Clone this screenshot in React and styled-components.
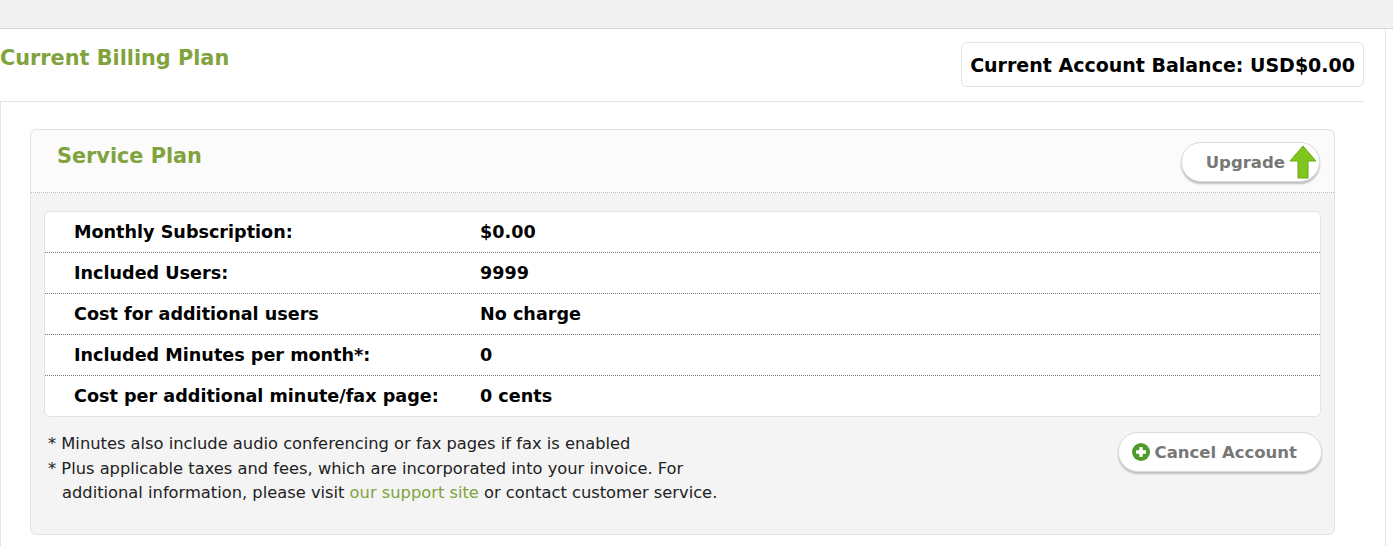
import React from 'react'
import styled, { createGlobalStyle } from 'styled-components'

const GlobalStyle = createGlobalStyle`
  body { margin: 0; background: #fff; font-family: "DejaVu Sans", Verdana, sans-serif; }
`

const TopBar = styled.div`
  height: 28px;
  background: #f1f1f1;
  border-bottom: 1px solid #d6d6d6;
`

const Page = styled.div`
  width: 1364px;
  border-right: 1px solid #e3e3e3;
  padding-right: 21px;
  box-sizing: content-box;
`

const Head = styled.div`
  display: flex;
  justify-content: space-between;
  align-items: flex-start;
  padding: 13px 0 14px;
`

const Title = styled.h1`
  margin: 4px 0 0;
  font-size: 20.8px;
  color: #80a33d;
  font-weight: bold;
`

const Balance = styled.div`
  border: 1px solid #e3e3e3;
  border-radius: 6px;
  padding: 11px 8px 10px;
  font-size: 19px;
  font-weight: bold;
  color: #000;
`

const Outer = styled.div`
  border: 1px solid #e5e5e5;
  border-right: none;
  padding: 27px 29px 12px;
`

const Panel = styled.div`
  background: #f4f4f4;
  border: 1px solid #e3e3e3;
  border-radius: 6px;
  padding-bottom: 28px;
`

const PanelHead = styled.div`
  display: flex;
  justify-content: space-between;
  background: #fbfbfb;
  border-bottom: 1px dotted #bdbdbd;
  border-radius: 6px 6px 0 0;
  padding: 12px 14px 8px 26px;
  height: 42px;
`

const PanelTitle = styled.h2`
  margin: 2px 0 0;
  font-size: 20.8px;
  color: #80a33d;
`

const Pill = styled.button`
  display: flex;
  align-items: center;
  gap: 4px;
  background: #fff;
  border: 1px solid #dcdcdc;
  border-radius: 22px;
  box-shadow: 0 2px 2px #bdbdbd;
  font-family: inherit;
  font-weight: bold;
  font-size: 16.5px;
  color: #777;
  padding: ${p => p.$pad};
  height: 40px;
`

const Table = styled.div`
  margin: 18px 13px 0;
  background: #fff;
  border: 1px solid #e3e3e3;
  border-radius: 6px;
`

const Row = styled.div`
  display: grid;
  grid-template-columns: 406px 1fr;
  padding: 0 29px;
  height: 40px;
  align-items: center;
  font-size: 17.6px;
  font-weight: bold;
  color: #000;
  & + & { border-top: 1px dotted #777; }
`

const Foot = styled.div`
  display: flex;
  justify-content: space-between;
  padding: 15px 12px 0 17px;
`

const Notes = styled.div`
  font-size: 16.3px;
  line-height: 24.5px;
  color: #222;
`

const Note = styled.div`
  padding-left: 14px;
  text-indent: -14px;
  max-width: 665px;
`

const Link = styled.a`
  color: #80a33d;
  text-decoration: none;
`

const rows = [
  ['Monthly Subscription:', '$0.00'],
  ['Included Users:', '9999'],
  ['Cost for additional users', 'No charge'],
  ['Included Minutes per month*:', '0'],
  ['Cost per additional minute/fax page:', '0 cents'],
]

const UpArrow = () => (
  <svg width="28" height="34" viewBox="0 0 28 34">
    <path d="M14 1 L27 16 H19 V33 H9 V16 H1 Z" fill="#7fc51c" stroke="#6aa814" />
  </svg>
)

const PlusCircle = () => (
  <svg width="20" height="20" viewBox="0 0 20 20">
    <circle cx="10" cy="10" r="9" fill="#4e9a2a" />
    <path d="M10 5v10M5 10h10" stroke="#fff" strokeWidth="3.4" />
  </svg>
)

export default function App () {
  return <>
    <GlobalStyle />
    <TopBar />
    <Page>
      <Head>
        <Title>Current Billing Plan</Title>
        <Balance>Current Account Balance: USD$0.00</Balance>
      </Head>
      <Outer>
        <Panel>
          <PanelHead>
            <PanelTitle>Service Plan</PanelTitle>
            <Pill $pad="0 2px 0 24px">Upgrade<UpArrow /></Pill>
          </PanelHead>
          <Table>
            {rows.map(([k, v]) => <Row key={k}><span>{k}</span><span>{v}</span></Row>)}
          </Table>
          <Foot>
            <Notes>
              <Note>* Minutes also include audio conferencing or fax pages if fax is enabled</Note>
              <Note>* Plus applicable taxes and fees, which are incorporated into your invoice. For additional information, please visit <Link href="#">our support site</Link> or contact customer service.</Note>
            </Notes>
            <Pill $pad="0 24px 0 12px">
              <PlusCircle />Cancel Account
            </Pill>
          </Foot>
        </Panel>
      </Outer>
    </Page>
  </>
}
